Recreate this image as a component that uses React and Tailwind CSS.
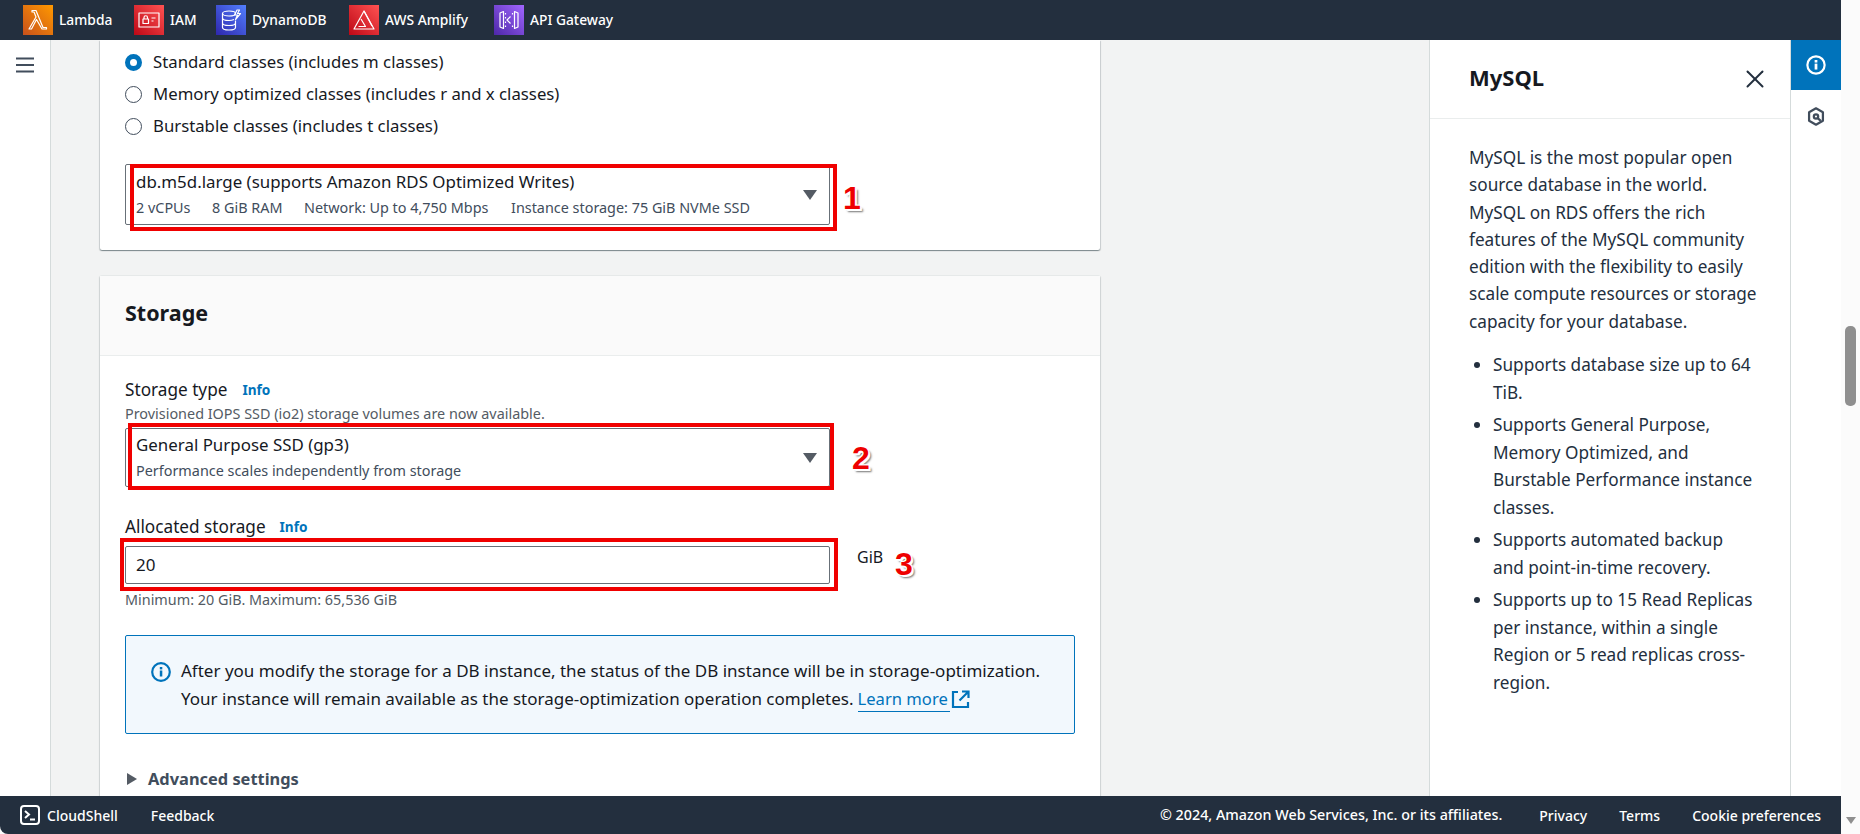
import { X } from 'lucide-react';

const ui = 'font-["Noto_Sans",sans-serif]';

function AwsTile({ id, from, to, children }) {
    return (
        <svg width="30" height="30" viewBox="0 0 30 30" className="shrink-0">
            <defs>
                <linearGradient id={id} x1="0" y1="1" x2="1" y2="0">
                    <stop offset="0" stopColor={from} />
                    <stop offset="1" stopColor={to} />
                </linearGradient>
            </defs>
            <rect width="30" height="30" fill={`url(#${id})`} />
            <g fill="none" stroke="#fff" strokeWidth="1.2" strokeLinejoin="round">{children}</g>
        </svg>
    );
}

function ServiceLink({ label, width, children }) {
    return (
        <div className={`flex items-center gap-[6px] shrink-0 ${width}`}>
            {children}
            <span className="text-[13.8px] font-medium text-white">{label}</span>
        </div>
    );
}

function TopBar() {
    return (
        <div className="h-10 bg-[#232f3e] flex items-center pl-[23px] shrink-0">
            <ServiceLink label="Lambda" width="w-[111px]">
                <AwsTile id="lambdaGrad" from="#C8511B" to="#FF9900">
                    <path d="M6 24l7-12-2-5H9V5.500h4l7 17h3.500V24H19L13.500 14.500 8.500 24z" />
                </AwsTile>
            </ServiceLink>
            <ServiceLink label="IAM" width="w-[82px]">
                <AwsTile id="iamGrad" from="#BD0816" to="#FF5252">
                    <rect x="5" y="8" width="20" height="14" />
                    <rect x="9" y="14" width="5.500" height="4.500" />
                    <path d="M10 14v-1.500a1.700 1.700 0 0 1 3.500 0V14M17.500 13h4M17.500 16h2" />
                </AwsTile>
            </ServiceLink>
            <ServiceLink label="DynamoDB" width="w-[133px]">
                <AwsTile id="dynamoGrad" from="#2E27AD" to="#527FFF">
                    <ellipse cx="13" cy="8.500" rx="6.500" ry="2.500" />
                    <path d="M6.500 8.500v14c0 1.500 3 2.500 6.500 2.500s6.500-1 6.500-2.500v-7M6.500 13c0 1.500 3 2.500 6.500 2.500 2 0 3.500-.3 5-1M6.500 18c0 1.500 3 2.500 6.500 2.500s6.500-1 6.500-2.500" />
                    <path d="M21 5l-2.500 5h3l-2 4.500 5-6h-3l2-3.500z" />
                </AwsTile>
            </ServiceLink>
            <ServiceLink label="AWS Amplify" width="w-[145px]">
                <AwsTile id="amplifyGrad" from="#BD0816" to="#FF5252">
                    <path d="M15 6l10 18H5z" />
                    <path d="M9.500 21.500h7L12 14M15 6l8 15" />
                </AwsTile>
            </ServiceLink>
            <ServiceLink label="API Gateway" width="">
                <AwsTile id="apiGrad" from="#4D27A8" to="#A166FF">
                    <path d="M9.500 6.500L6 8v14l3.500 1.500zM20.500 6.500L24 8v14l-3.500 1.500z" />
                    <path d="M16.500 11.500L13 15l3.500 3.500" />
                    <path d="M11.500 8v1.500M11.500 12v1.500M11.500 16.500V18M11.500 20.500V22M18.500 8v1.500M18.500 20.500V22" />
                </AwsTile>
            </ServiceLink>
        </div>
    );
}

function Radio({ checked, label }) {
    return (
        <div className="flex items-center gap-[11px] h-8 ml-[-1px] pl-[1px]">
            {checked ? (
                <span className="w-[17px] h-[17px] rounded-full border-[5px] border-[#0073bb] bg-white" />
            ) : (
                <span className="w-[17px] h-[17px] rounded-full border border-[#414d5c] bg-white" />
            )}
            <span className="text-[16.75px] text-[#16191f]">{label}</span>
        </div>
    );
}

function Caret() {
    return (
        <svg width="14" height="10" viewBox="0 0 14 10" className="shrink-0">
            <path d="M0 0h14L7 10z" fill="#545b64" />
        </svg>
    );
}

// red rectangle + number the screenshot's author drew on top
function Callout({ box, num, numPos }) {
    return (
        <>
            <div className={`absolute border-4 border-[#f00000] pointer-events-none ${box}`} />
            <span
                className={`absolute font-["Liberation_Sans",sans-serif] font-bold text-[32px] leading-none text-[#ee0000] [text-shadow:1px_1px_0_#fff,-1px_-1px_0_#fff,1px_-1px_0_#fff,-1px_1px_0_#fff,2px_2px_0_#fff,3px_3px_2px_rgba(0,0,0,.55)] ${numPos}`}
            >
                {num}
            </span>
        </>
    );
}

function SelectBox({ className, children }) {
    return (
        <div className={`flex items-center justify-between bg-white border border-[#687078] rounded-[2px] pl-[10px] pr-[12px] ${className}`}>
            <div>{children}</div>
            <Caret />
        </div>
    );
}

function InstanceCard() {
    return (
        <section className="bg-white rounded-b-[2px] shadow-[0_1px_1px_0_rgba(0,28,36,0.3),1px_1px_1px_0_rgba(0,28,36,0.15),-1px_1px_1px_0_rgba(0,28,36,0.15)] pl-[25px] pr-[25px] pt-[6px] h-[210px]">
            <div>
                <Radio checked label="Standard classes (includes m classes)" />
                <Radio label="Memory optimized classes (includes r and x classes)" />
                <Radio label="Burstable classes (includes t classes)" />
            </div>
            <div className="relative w-[705px] mt-[22px]">
                <SelectBox className="h-[61px]">
                    <div className="text-[16.9px] leading-[22px] text-[#16191f]">db.m5d.large (supports Amazon RDS Optimized Writes)</div>
                    <div className="text-[14.4px] leading-[20px] mt-[5px] text-[#414d5c] flex">
                        <span className="w-[76px]">2 vCPUs</span>
                        <span className="w-[92px]">8 GiB RAM</span>
                        <span className="w-[207px]">Network: Up to 4,750 Mbps</span>
                        <span>Instance storage: 75 GiB NVMe SSD</span>
                    </div>
                </SelectBox>
                <Callout box="left-[5px] top-0 w-[707px] h-[67px]" num="1" numPos="left-[718px] top-[18px]" />
            </div>
        </section>
    );
}

function InfoLink({ className }) {
    return <span className={`text-[13.6px] font-bold text-[#0073bb] ${className}`}>Info</span>;
}

function StorageCard() {
    return (
        <section className="bg-white mt-[26px] rounded-t-[2px] shadow-[0_-1px_0_0_#e6e9e9,1px_0_1px_0_rgba(0,28,36,0.15),-1px_0_1px_0_rgba(0,28,36,0.15)]">
            <div className="h-20 bg-[#fafafa] border-b border-[#eaeded] flex items-center pl-[25px]">
                <h2 className="text-[21.5px] font-bold text-[#16191f] mb-[5px]">Storage</h2>
            </div>
            <div className="px-[25px] pt-[22px] pb-10">
                <div className="flex items-center h-6 text-[17.2px] text-[#16191f]">
                    Storage type
                    <InfoLink className="ml-[15px]" />
                </div>
                <p className="text-[14.4px] leading-[20px] text-[#545b64] mt-[2px]">Provisioned IOPS SSD (io2) storage volumes are now available.</p>
                <div className="relative w-[705px] mt-[4px]">
                    <SelectBox className="h-[59px]">
                        <div className="text-[16.9px] leading-[22px] text-[#16191f]">General Purpose SSD (gp3)</div>
                        <div className="text-[14.4px] leading-[20px] mt-[5px] text-[#414d5c]">Performance scales independently from storage</div>
                    </SelectBox>
                    <Callout box="left-[3px] -top-[5px] w-[706px] h-[67px]" num="2" numPos="left-[727px] top-[14px]" />
                </div>
                <div className="flex items-center h-6 mt-[28px] text-[17.2px] text-[#16191f]">
                    Allocated storage
                    <InfoLink className="ml-[14px]" />
                </div>
                <div className="relative w-[705px] mt-[7px]">
                    <div className="h-[38px] border border-[#687078] rounded-[2px] bg-white flex items-center pl-[10px] text-[17px] text-[#16191f]">20</div>
                    <Callout box="-left-[5px] -top-[8px] w-[718px] h-[53px]" num="3" numPos="left-[770px] top-[2px]" />
                    <span className="absolute left-[732px] -top-[1px] text-[16px] text-[#16191f]">GiB</span>
                </div>
                <p className="text-[14.4px] leading-[20px] text-[#545b64] mt-[6px]">Minimum: 20 GiB. Maximum: 65,536 GiB</p>

                <div className="mt-[25px] h-[99px] border border-[#0073bb] rounded-[2px] bg-[#f2f8fd] flex pl-[25px] pt-[21px]">
                    <svg width="20" height="20" viewBox="0 0 20 20" className="shrink-0 mt-[5px]">
                        <circle cx="10" cy="10" r="8.800" fill="none" stroke="#0073bb" strokeWidth="2.200" />
                        <rect x="8.800" y="8.500" width="2.500" height="6" fill="#0073bb" />
                        <rect x="8.800" y="5" width="2.500" height="2.400" fill="#0073bb" />
                    </svg>
                    <div className="ml-[10px] text-[17px] leading-[28px] text-[#16191f]">
                        <div>After you modify the storage for a DB instance, the status of the DB instance will be in storage-optimization.</div>
                        <div className="flex items-center">
                            Your instance will remain available as the storage-optimization operation completes.
                            <a className="ml-[4px] text-[16.6px] text-[#0073bb] border-b border-[#0073bb] leading-[24px] pr-[2px]">Learn more</a>
                            <svg width="19" height="19" viewBox="0 0 19 19" className="ml-[1px]" fill="none" stroke="#0073bb" strokeWidth="2.200">
                                <path d="M7 2H2v15h15v-5M11 1.500h6.500V8M17 2L8.500 10.500" />
                            </svg>
                        </div>
                    </div>
                </div>

                <div className="flex items-center gap-[10px] mt-[33px] ml-[1px]">
                    <svg width="12" height="14" viewBox="0 0 12 14"><path d="M1 1l10 6-10 6z" fill="#545b64" /></svg>
                    <span className="text-[16.4px] font-bold text-[#414d5c]">Advanced settings</span>
                </div>
            </div>
        </section>
    );
}

function HelpPanel() {
    const bullets = [
        'Supports database size up to 64 TiB.',
        'Supports General Purpose, Memory Optimized, and Burstable Performance instance classes.',
        'Supports automated backup and point-in-time recovery.',
        'Supports up to 15 Read Replicas per instance, within a single Region or 5 read replicas cross-region.',
    ];
    return (
        <aside className="w-[362px] shrink-0 bg-white border-l border-r border-[#d5dbdb]">
            <div className="h-[79px] border-b border-[#eaeded] flex items-center justify-between pl-[39px] pr-[20px]">
                <h2 className="text-[22px] font-bold text-[#16191f] mb-[4px]">MySQL</h2>
                <X size={30} strokeWidth={1.6} className="text-[#232f3e]" />
            </div>
            <div className="pl-[39px] pr-[33px] pt-[25px] text-[17.2px] text-[#232f3e]">
                <p className="leading-[27.3px]">MySQL is the most popular open source database in the world. MySQL on RDS offers the rich features of the MySQL community edition with the flexibility to easily scale compute resources or storage capacity for your database.</p>
                <ul className="list-disc pl-6 mt-[16px] space-y-[5px] leading-[27.5px]">
                    {bullets.map((b) => <li key={b}>{b}</li>)}
                </ul>
            </div>
        </aside>
    );
}

function Rail() {
    return (
        <div className="w-[50px] shrink-0 bg-white">
            <div className="h-[50px] bg-[#0073bb] flex items-center justify-center">
                <svg width="20" height="20" viewBox="0 0 22 22">
                    <circle cx="11" cy="11" r="9.500" fill="none" stroke="#fff" strokeWidth="2.400" />
                    <rect x="9.500" y="9.500" width="3" height="6.500" fill="#fff" />
                    <rect x="9.500" y="5.500" width="3" height="2.800" fill="#fff" />
                </svg>
            </div>
            <div className="h-[52px] flex items-center justify-center">
                <svg width="18" height="19" viewBox="0 0 20 22" fill="none" stroke="#414d5c" strokeWidth="2.600">
                    <path d="M10 1.500l8 4.500v10l-8 4.500-8-4.500V6z" strokeLinejoin="round" />
                    <circle cx="10" cy="11" r="2.500" />
                    <path d="M12 13l3.500 3" />
                </svg>
            </div>
        </div>
    );
}

function BottomBar() {
    return (
        <div className="h-[38px] bg-[#232f3e] rounded-bl-lg flex items-center justify-between pl-[20px] pr-[20px] shrink-0 text-[14px] text-white">
            <div className="flex items-center">
                <svg width="20" height="20" viewBox="0 0 20 20" fill="none" stroke="#fff" strokeWidth="2">
                    <rect x="1" y="1" width="18" height="18" rx="3" />
                    <path d="M5 6l4 3.500L5 13M10 14.500h5" />
                </svg>
                <span className="ml-[7px] font-medium">CloudShell</span>
                <span className="ml-[33px] font-medium">Feedback</span>
            </div>
            <div className="flex items-center font-medium">
                <span className="text-[14.3px]">© 2024, Amazon Web Services, Inc. or its affiliates.</span>
                <span className="ml-[37px]">Privacy</span>
                <span className="ml-[32px]">Terms</span>
                <span className="ml-[32px]">Cookie preferences</span>
            </div>
        </div>
    );
}

export default function App() {
    return (
        <div className={`${ui} w-[1860px] h-[834px] flex overflow-hidden bg-[#fbfbfb]`}>
            <div className="w-[1841px] flex flex-col">
                <TopBar />
                <div className="flex-1 flex min-h-0 overflow-hidden">
                    <div className="w-[51px] shrink-0 bg-white border-r border-[#d5dbdb] flex justify-center pt-[17px]">
                        <svg width="18" height="16" viewBox="0 0 18 16">
                            <path d="M0 1.500h18M0 8h18M0 14.500h18" stroke="#414d5c" strokeWidth="2.200" />
                        </svg>
                    </div>
                    <div className="flex-1 min-w-0 bg-[#f2f3f3] pl-[49px] overflow-hidden">
                        <div className="w-[1000px]">
                            <InstanceCard />
                            <StorageCard />
                        </div>
                    </div>
                    <HelpPanel />
                    <Rail />
                </div>
                <BottomBar />
            </div>
            {/* browser scrollbar */}
            <div className="w-[19px] relative">
                <div className="absolute left-[4px] top-[326px] w-[11px] h-[80px] rounded-[5px] bg-[#8f8f8f]" />
                <svg width="10" height="7" viewBox="0 0 10 7" className="absolute left-[5px] top-[817px]"><path d="M0 0h10L5 7z" fill="#8f8f8f" /></svg>
            </div>
        </div>
    );
}
